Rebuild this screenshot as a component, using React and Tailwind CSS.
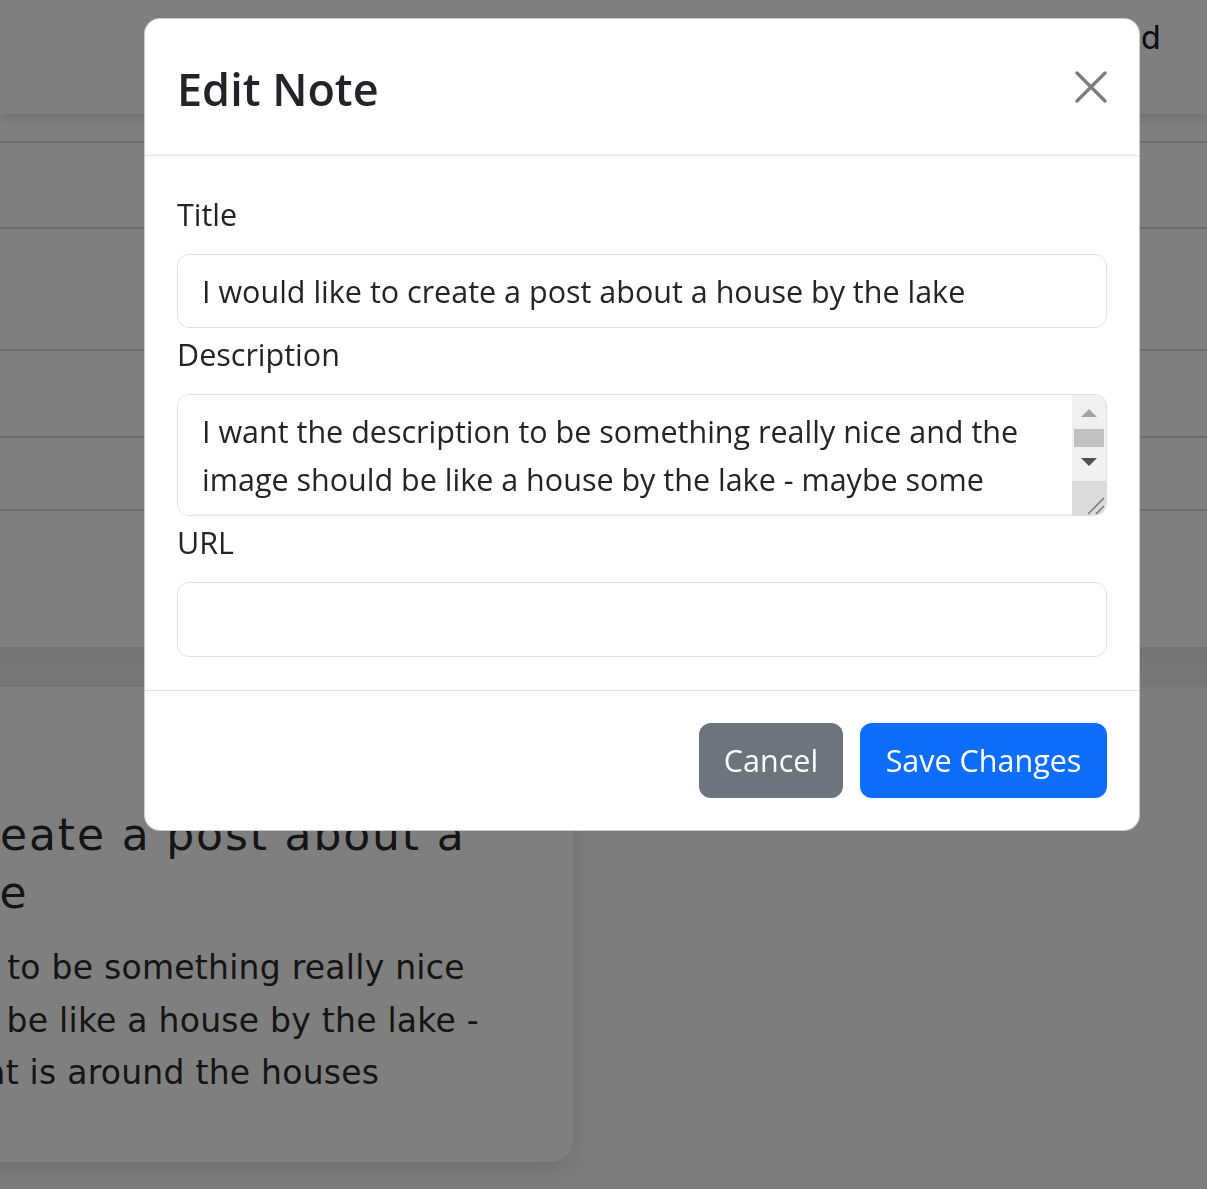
export default function App() {
  return (
    <div className="relative h-[1189px] overflow-hidden bg-[#fcfaf6] font-['DejaVu_Sans',sans-serif] text-[#2b2b2b]">
      <nav className="relative z-10 flex h-[114px] items-start justify-between bg-white pl-[200px] pr-[42px] pt-[14px] shadow-[0_3px_12px_rgba(0,0,0,0.14)]">
        <span className="text-[32px] text-[#1a1a1a]">Notes</span>
        <a className="text-[32px] tracking-[4px] text-[#1a1a1a]">Add</a>
      </nav>

      <section className="bg-white">
        <div className="h-[29px] border-b-2 border-[#dadada]" />
        <div className="h-[86px] border-b-2 border-[#dadada]" />
        <div className="h-[122px] border-b-2 border-[#dadada]" />
        <div className="h-[87px] border-b-2 border-[#dadada]" />
        <div className="h-[73px] border-b-2 border-[#dadada]" />
        <div className="h-[136px]" />
      </section>

      <div className="h-[40px] bg-linear-to-b from-[#e9e8e4] to-[#f0eeea]" />

      <div className="-ml-[397px] h-[475px] w-[970px] rounded-[22px] bg-white pl-[32px] pt-[119px] shadow-[0_8px_24px_rgba(0,0,0,0.12)]">
        <h5 className="-ml-[29px] text-[44px] leading-[58px] tracking-[1.85px]">
          <span className="block whitespace-nowrap">I would like to create a post about a</span>
          <span className="block whitespace-nowrap">house by the lake</span>
        </h5>
        <p className="-ml-[4px] mt-[20px] text-[33px] leading-[52.5px] tracking-[0.25px]">
          <span className="block whitespace-nowrap">I want the description to be something really nice</span>
          <span className="block whitespace-nowrap">and the image should be like a house by the lake -</span>
          <span className="-ml-[8px] block whitespace-nowrap">maybe some grass that is around the houses</span>
        </p>
      </div>

      <div className="fixed inset-0 z-50 bg-black/50">
        <div className="absolute left-[144px] top-[18px] w-[996px] rounded-[16px] border border-black/20 bg-white font-['Open_Sans',sans-serif] text-[#212529]">
          <div className="flex h-[137px] items-center justify-between border-b border-[#dee2e6] px-[32px]">
            <h5 className="mt-[4px] text-[45px] font-semibold leading-[72px]">Edit Note</h5>
            <button className="flex h-[32px] w-[32px] items-center justify-center" aria-label="Close">
              <svg width="32" height="32" viewBox="0 0 32 32">
                <path d="M2 2L30 30M30 2L2 30" stroke="#7b7b7b" strokeWidth="3.2" strokeLinecap="round" />
              </svg>
            </button>
          </div>

          <div className="px-[32px] pt-[32px] pb-[33px] text-[30.5px]">
            <label className="mb-[16px] block pt-[2px] leading-[48px]">Title</label>
            <input
              className="block h-[74px] w-full rounded-[12px] border border-[#dee2e6] px-[24px] text-[#212529] outline-none"
              defaultValue="I would like to create a post about a house by the lake"
            />
            <label className="mb-[16px] block pt-[2px] leading-[48px]">Description</label>
            <div className="flex h-[122px] overflow-hidden rounded-[12px] border border-[#dee2e6]">
              <textarea
                className="h-full min-w-0 flex-1 resize-none overflow-hidden bg-white px-[24px] py-[12px] leading-[48px] text-[#212529] outline-none"
                defaultValue="I want the description to be something really nice and the image should be like a house by the lake - maybe some grass that is around the houses"
              />
              <div className="flex w-[34px] flex-col bg-[#f0f0f0]">
                <div className="h-[34px]">
                  <svg width="34" height="34" viewBox="0 0 34 34">
                    <polygon points="9,22 25,22 17,14" fill="#a3a3a3" />
                  </svg>
                </div>
                <div className="mx-[2px] h-[18px] bg-[#c1c1c1]" />
                <div className="h-[34px]">
                  <svg width="34" height="34" viewBox="0 0 34 34">
                    <polygon points="9,11 25,11 17,19" fill="#505050" />
                  </svg>
                </div>
                <div className="h-[34px] bg-[#dcdcdc]">
                  <svg width="34" height="34" viewBox="0 0 34 34">
                    <path d="M16 33L32 17M24 33L32 25" stroke="#7a7a7a" strokeWidth="1.5" />
                  </svg>
                </div>
              </div>
            </div>
            <label className="mb-[16px] block pt-[2px] leading-[48px]">URL</label>
            <input className="block h-[75px] w-full rounded-[12px] border border-[#dee2e6] px-[24px] text-[#212529] outline-none" defaultValue="" />
          </div>

          <div className="flex justify-end gap-[17px] border-t border-[#dee2e6] px-[32px] py-[32px] text-[30.5px]">
            <button className="h-[75px] w-[144px] rounded-[12px] bg-[#6c757d] text-white">Cancel</button>
            <button className="h-[75px] w-[247px] rounded-[12px] bg-[#0d6efd] text-white">Save Changes</button>
          </div>
        </div>
      </div>
    </div>
  );
}
